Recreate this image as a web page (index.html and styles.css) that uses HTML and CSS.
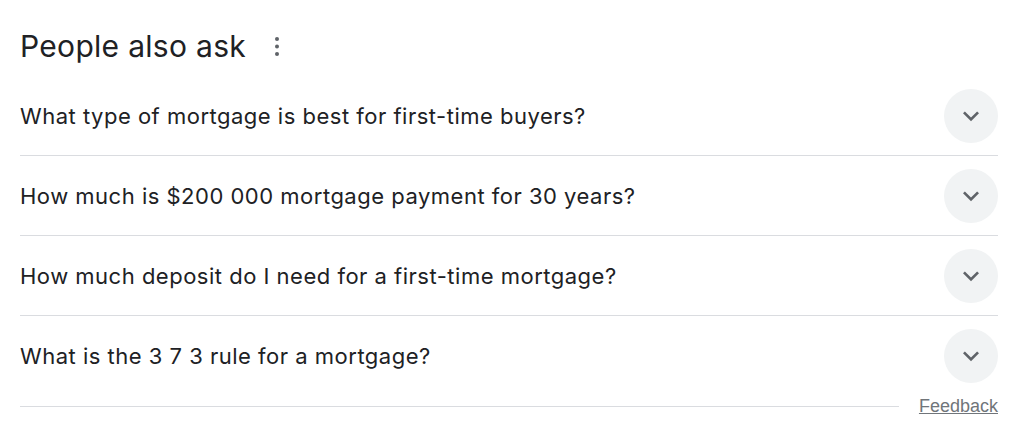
FILE: index.html
```html
<!DOCTYPE html>
<html>
<head>
<meta charset="utf-8">
<link rel="stylesheet" href="styles.css">
</head>
<body>
<div class="paa">
  <div class="header">
    <h2 class="title">People also ask</h2>
    <span class="kebab" aria-label="About this result">
      <svg width="4" height="19" viewBox="0 0 4 19"><circle cx="2" cy="2" r="2"/><circle cx="2" cy="9.5" r="2"/><circle cx="2" cy="17" r="2"/></svg>
    </span>
  </div>
  <div class="list">
    <div class="row">
      <span class="q">What type of mortgage is best for first-time buyers?</span>
      <span class="chev"><svg width="32" height="32" viewBox="0 0 24 24"><path d="M16.59 8.59L12 13.17 7.41 8.59 6 10l6 6 6-6z"/></svg></span>
    </div>
    <div class="row">
      <span class="q">How much is $200 000 mortgage payment for 30 years?</span>
      <span class="chev"><svg width="32" height="32" viewBox="0 0 24 24"><path d="M16.59 8.59L12 13.17 7.41 8.59 6 10l6 6 6-6z"/></svg></span>
    </div>
    <div class="row">
      <span class="q">How much deposit do I need for a first-time mortgage?</span>
      <span class="chev"><svg width="32" height="32" viewBox="0 0 24 24"><path d="M16.59 8.59L12 13.17 7.41 8.59 6 10l6 6 6-6z"/></svg></span>
    </div>
    <div class="row">
      <span class="q">What is the 3 7 3 rule for a mortgage?</span>
      <span class="chev"><svg width="32" height="32" viewBox="0 0 24 24"><path d="M16.59 8.59L12 13.17 7.41 8.59 6 10l6 6 6-6z"/></svg></span>
    </div>
  </div>
  <div class="footer">
    <div class="rule"></div>
    <a class="feedback" href="#">Feedback</a>
  </div>
</div>
</body>
</html>
```
FILE: styles.css
```css
html, body {
  margin: 0;
  padding: 0;
  background: #fff;
}
body {
  font-family: Inter, "Open Sans", Roboto, "Liberation Sans", Arial, sans-serif;
  color: #202124;
}
.paa {
  width: 978px;
  padding: 0 0 0 20px;
}
.header {
  display: flex;
  align-items: center;
  height: 68px;
  padding-top: 24px;
  box-sizing: border-box;
}
.title {
  margin: 0;
  font-weight: 400;
  font-size: 30px;
  line-height: 36px;
  letter-spacing: 0.3px;
  color: #202124;
}
.kebab {
  display: flex;
  margin-left: 29px;
  fill: #5f6368;
}
.list {
  display: flex;
  flex-direction: column;
  margin-top: 8px;
}
.row {
  display: flex;
  align-items: center;
  justify-content: space-between;
  height: 80px;
  border-bottom: 1px solid #dadce0;
  box-sizing: border-box;
}
.row:last-child {
  border-bottom: none;
}
.q {
  font-size: 22px;
  line-height: 28px;
  letter-spacing: 0.5px;
}
.chev {
  width: 54px;
  height: 54px;
  border-radius: 50%;
  background: #f1f3f4;
  display: flex;
  align-items: center;
  justify-content: center;
  fill: #5f6368;
}
.footer {
  display: flex;
  align-items: center;
  height: 20px;
}
.rule {
  flex: 1;
  height: 1px;
  background: #dadce0;
  margin-right: 20px;
}
.feedback {
  font-family: Arial, "Liberation Sans", sans-serif;
  font-size: 18px;
  color: #70757a;
  text-decoration: underline;
}
```
